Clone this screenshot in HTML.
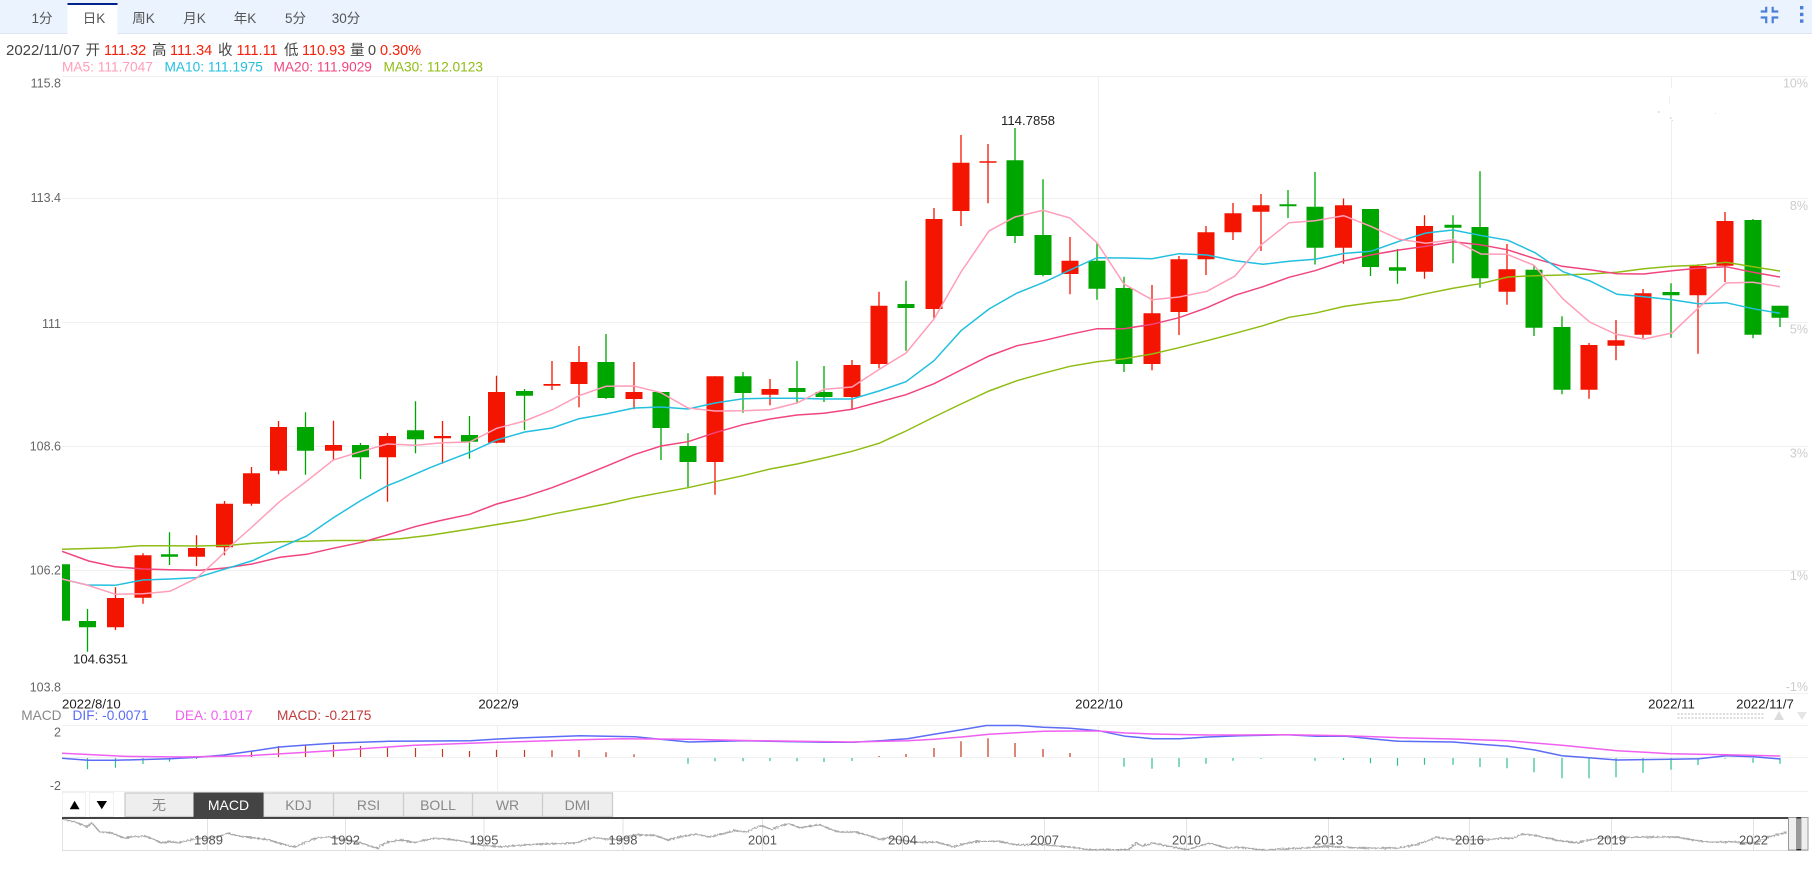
<!DOCTYPE html>
<html lang="zh">
<head>
<meta charset="utf-8">
<title>Chart</title>
<style>
html,body{margin:0;padding:0;background:#fff;width:1812px;height:881px;overflow:hidden}
svg{display:block;font-family:"Liberation Sans","Noto Sans CJK SC",sans-serif}
.t{font-size:13.5px;fill:#555;text-anchor:middle}
.i{font-size:14.5px;fill:#444}
.v{font-size:14.5px;fill:#f5200a}
.a{font-size:12.5px;fill:#666;text-anchor:end}
.p{font-size:12.5px;fill:#ccc;text-anchor:end}
.x{font-size:13.2px;fill:#222;text-anchor:middle}
.m{font-size:13.7px}
.b{font-size:14px;fill:#888;text-anchor:middle}
.y{font-size:13px;fill:#555;text-anchor:middle}
</style>
</head>
<body>
<svg width="1812" height="881" viewBox="0 0 1812 881" xmlns="http://www.w3.org/2000/svg">
<defs>
<clipPath id="c"><rect x="62" y="70" width="1750" height="640"/></clipPath>
<filter id="n" x="0" y="-20%" width="100%" height="140%"><feTurbulence type="fractalNoise" baseFrequency="0.45" numOctaves="2" seed="3"/><feDisplacementMap in="SourceGraphic" scale="3"/></filter>
</defs>
<rect width="1812" height="881" fill="#fff"/>
<!-- toolbar -->
<rect width="1812" height="33" fill="#eaf3fe"/>
<rect y="33" width="1812" height="1" fill="#dce5f0"/>
<rect x="67.5" y="3" width="50" height="31" fill="#fff"/>
<rect x="67.5" y="3" width="50" height="2" fill="#00238c"/>
<text class="t" x="42" y="23">1分</text>
<text class="t" x="94" y="23">日K</text>
<text class="t" x="143.5" y="23">周K</text>
<text class="t" x="194.5" y="23">月K</text>
<text class="t" x="245" y="23">年K</text>
<text class="t" x="295.5" y="23">5分</text>
<text class="t" x="346" y="23">30分</text>
<path d="M1760.7 11.5H1766.2V6.7M1772.7 6.7V11.5H1778.3M1760.7 17.5H1766.2V23.3M1778.3 17.5H1772.7V23.3" fill="none" stroke="#4a80d8" stroke-width="2.2"/>
<path d="M1800 6h3.4v3.4h-3.4zM1800 12.7h3.4v3.4h-3.4zM1800 19.4h3.4v3.4h-3.4z" fill="#4a80d8"/>
<!-- info -->
<text class="i" x="6" y="55" style="font-size:15px">2022/11/07</text>
<text class="i" x="85.5" y="55">开</text><text class="v" x="104" y="55">111.32</text>
<text class="i" x="152" y="55">高</text><text class="v" x="170" y="55">111.34</text>
<text class="i" x="218" y="55">收</text><text class="v" x="236.5" y="55">111.11</text>
<text class="i" x="284" y="55">低</text><text class="v" x="302" y="55">110.93</text>
<text class="i" x="350" y="55">量</text><text class="i" x="368" y="55">0</text>
<text class="v" x="380" y="55">0.30%</text>
<text class="m" x="62" y="71.5" fill="#ff9eb8">MA5: 111.7047</text>
<text class="m" x="164.5" y="71.5" fill="#22bfdf">MA10: 111.1975</text>
<text class="m" x="273.5" y="71.5" fill="#f0457f">MA20: 111.9029</text>
<text class="m" x="383.5" y="71.5" fill="#8fbc15">MA30: 112.0123</text>
<!-- grid -->
<path d="M62 76.5H1808M62 198.5H1808M62 322.5H1808M62 446.5H1808M62 570.5H1808M62 693.5H1808M62 725.5H1808M62 757.5H1808M62 791.5H1808" stroke="#efefef" stroke-width="1" fill="none"/>
<path d="M497.5 76V693M497.5 726V792M1098.5 76V693M1098.5 726V792M1671.5 76V88M1671.5 120V693M1671.5 726V792" stroke="#efefef" stroke-width="1" fill="none"/>
<path d="M1658 111h1.5v2h-1.5zM1670 117h1.5v2h-1.5zM1672 120h1v1h-1zM1715 113h1v1h-1z" fill="#dcdcdc"/>
<path d="M1669 96h1v8h-1z" fill="#f0f0f0"/>
<!-- axis labels -->
<text class="a" x="61" y="87.5">115.8</text>
<text class="a" x="61" y="202">113.4</text>
<text class="a" x="61" y="328">111</text>
<text class="a" x="61" y="450.5">108.6</text>
<text class="a" x="61" y="574.5">106.2</text>
<text class="a" x="61" y="691.5">103.8</text>
<text class="p" x="1808" y="87.5">10%</text>
<text class="p" x="1808" y="210">8%</text>
<text class="p" x="1808" y="333.5">5%</text>
<text class="p" x="1808" y="457.5">3%</text>
<text class="p" x="1808" y="580">1%</text>
<text class="p" x="1808" y="691">-1%</text>
<!-- candles -->
<g clip-path="url(#c)" fill="none">
<path stroke="#f41500" stroke-width="1.3" d="M115.5 587.3V630M143 553.3V603.7M196.5 535.3V566M224.5 501V555.3M251.5 467V505.7M278.5 421V474.3M333.5 420.7V460M387.5 433V501.7M442.5 421V463.7M496.5 375.7V443.3M552 361V390M579 346V407.3M634 362V409.3M715 376.3V494.7M770 379V405.3M852 360V409M879 291.7V368.3M934 208V318.3M961 135V226M988 144V203.3M1070 237V294.3M1152 285V370.3M1179 256V335M1206 226V275M1233 203V240M1261 194V251M1343.5 198.5V263.7M1424.5 215.3V278.7M1507 244V304.7M1589 343V398.7M1616 320V360.3M1643 289V338M1698 264.3V353.7M1725 212V282"/>
<path stroke="#f41500" stroke-width="17" d="M115.5 598V627.3M143 555.3V597.7M196.5 548V556.7M224.5 503.7V547.3M251.5 473.3V503.7M278.5 427V470.7M333.5 445V450.7M387.5 436V457.3M442.5 436V438.3M496.5 392V442.7M552 384V385.7M579 362V384M634 392V399M715 376.3V462M770 389V394.7M852 365V397M879 305.7V364M934 219V309M961 162.7V211M988 161.3V162.7M1070 260.7V274M1152 313.3V364M1179 259.3V312M1206 232.3V259.3M1233 213.3V232.3M1261 205.3V211.7M1343.5 205.3V247.7M1424.5 226V271.7M1507 269.3V291.7M1589 345V389.7M1616 340.3V345.7M1643 293.3V334.7M1698 266V295.3M1725 221V265.7"/>
<path stroke="#00a600" stroke-width="1.3" d="M87.5 609V651.7M169.5 532.3V565M305.5 412.3V474.7M360.5 443V479M415.5 401.3V453.3M469.5 416V458.7M524.5 389V430M606 334V399M661 392V460M688 433.3V487.7M743 372V412.7M797 361V402.3M824 366V402M906 280.7V350.7M1015 128V243M1043 179.3V276.3M1097 243.3V299.7M1124 276.7V372M1288 190V218M1315 172V264.5M1370.5 209V276M1397.5 249V283.7M1453 215.3V263.3M1480 171.3V287.7M1534 265V336M1562 316.3V394.3M1671 283.3V337.7M1753 219V338.3M1780 305.7V327"/>
<path stroke="#00a600" stroke-width="17" d="M61.5 564.3V620.7M87.5 621V627.3M169.5 554.3V556.7M305.5 427V450.7M360.5 445V457.3M415.5 430.3V439.3M469.5 435V441.7M524.5 391V395.7M606 362V398M661 392V428M688 446V462M743 376.3V393M797 388V392M824 392V397M906 304V308M1015 160.3V236M1043 235V275M1097 260.7V288.7M1124 288V364M1288 204.3V206.3M1315 206.7V247.7M1370.5 209V267M1397.5 267.3V270.7M1453 224.7V227.7M1480 227V278.3M1534 269.7V327.7M1562 327V389.7M1671 292V295.3M1753 220V334.7M1780 305.7V317.7"/>
<!-- MA lines -->
<polyline stroke="#8fbc15" stroke-width="1.5" points="62,549.3 115,547.7 140,545.7 170,545.7 196.7,546 230,545.3 253,543.3 280,541.7 306.7,541.3 333,540.5 370,540.5 400,538.7 430,535.3 470,529 497,524.5 525,520 556.7,513.3 606,504 634,497.7 661,492.7 688,487.7 715,481.7 743,475.7 770,469 797,464 824,458 852,451.3 879,443.3 906,431 934,417 961,404 989,391 1017,380.7 1043,373.3 1070,366.3 1097,361.7 1124,358.7 1152,354 1179,347.7 1207,340.7 1235,333.3 1263,325.7 1289,317.3 1315,313.2 1343.7,306.5 1370.7,302.7 1399,299.7 1426,293.7 1453,288.3 1480,283.7 1508,277 1535,275.7 1563,275 1590,274 1617,272.3 1644,268.7 1672,266.3 1698,265.3 1726,262.3 1753,266.7 1780,271"/>
<polyline stroke="#f0457f" stroke-width="1.5" points="62,551.3 88.7,561 115,566.7 143,569 170,569.7 200,570.3 225,568 252,564 280,557.3 306.7,554.3 333,548.3 361.7,542.3 387,535 415,526.7 430,523 443,520 469.7,514.3 496.7,504 524.7,496.7 552,487.7 579,477.3 606,466.3 634,454.7 661,446 688,441.7 715,432.7 743,424.7 770,419 797,415 824,413.3 852,409.3 879,402 906,394.7 934,383.7 961,370 989,356 1017,345.7 1043,340.7 1070,334.3 1097,328.7 1124,328.7 1152,324.3 1179,317.7 1207,307.7 1235,295.3 1263,286.7 1289,277.3 1315,270.7 1343.7,261 1370.7,255 1399,250 1426,246.3 1453,241.7 1480,244.7 1507,249.7 1534,258.3 1562,266.3 1590,269.7 1617,273.7 1644,274 1672,270.7 1698,268.3 1726,266.7 1753,272.3 1780,277"/>
<polyline stroke="#22bfdf" stroke-width="1.5" points="62,579 87,585 115,585.3 143,580 170,579 196,577.7 224,569.3 253,560.5 279,548 306.7,536 333,518 360,501 387.3,485.7 400,480.7 430,467.7 442.7,462.7 469.7,452.3 496.7,440 524.7,432 552,428 579,418.7 606,414 634,408 661,407 688,409 715,403 743,398.7 770,398.3 797,398.3 824,399 852,399 879,391 906,381.7 934,360.7 961,330.7 989,309 1017,293 1043,282.7 1070,270 1097,257.7 1124,258 1152,258.7 1179,253.7 1207,255 1235,260.7 1263,264.3 1289,261.3 1315,259.2 1343.7,253.5 1370.7,251.3 1399,241.3 1426,233 1453,230 1480,235.3 1508,240.3 1535,252.7 1563,271.7 1590,281 1617,294.3 1644,296.7 1672,299.7 1698,303.7 1726,302.7 1753,308.7 1780,313.3"/>
<polyline stroke="#ff9eb8" stroke-width="1.5" points="62,579 87,585 115.5,594.3 143,593.7 170,591.3 196.5,578.3 216.7,560 231.7,545 252,527 279.5,501.7 306,481.7 333.3,460 360.3,451.7 387.3,444 415.5,445.3 442.7,442.7 469.7,442 496.7,428.3 524.7,421 552,410 579,395.7 606,386.3 634,386 661,392.7 688,408 715,411 743,410.7 770,409.7 797,403 824,389.3 852,387 879,369.5 906,353 934,319 961,272 989,231 1015,217 1043,210.3 1070,218 1097,242.7 1124,284 1152,299.7 1179,297 1207,291.3 1235,276 1261,245 1289,222.7 1315,220.8 1343.7,215.7 1370.7,226.3 1399,239.3 1426,243.3 1453,239.7 1481,254 1507,254.3 1534,265.3 1563,299 1590,322.3 1616,334.3 1644,339 1672,333 1698,308.3 1726,283 1753,282.3 1780,286.7"/>
</g>
<text class="x" x="100.5" y="663.5">104.6351</text>
<text class="x" x="1028" y="125">114.7858</text>
<!-- x labels -->
<text class="x" x="62" y="708.5" style="text-anchor:start">2022/8/10</text>
<text class="x" x="498.5" y="708.5">2022/9</text>
<text class="x" x="1099" y="708.5">2022/10</text>
<text class="x" x="1671.5" y="708.5">2022/11</text>
<text class="x" x="1765" y="708.5">2022/11/7</text>
<path d="M1677.5 714H1764M1677.5 718H1764" stroke="#ddd" stroke-width="2" stroke-dasharray="2 1.5" fill="none"/>
<path d="M1779 711L1784 720H1774Z" fill="#ddd"/>
<path d="M1797 712H1807L1802 720Z" fill="#e5e5e5"/>
<!-- MACD header -->
<text class="m" x="61.5" y="720" fill="#888" style="text-anchor:end">MACD</text>
<text class="m" x="72.5" y="720" fill="#5b6cf5">DIF: -0.0071</text>
<text class="m" x="175" y="720" fill="#f060f0">DEA: 0.1017</text>
<text class="m" x="277" y="720" fill="#c03a3a">MACD: -0.2175</text>
<text class="a" x="61" y="736.5">2</text>
<text class="a" x="61" y="790">-2</text>
<!-- MACD bars -->
<path fill="none" stroke="#2fc08f" stroke-width="1.2" d="M87.5 758V769.3M115.5 758V767.7M143 758V764M169.5 758V761.7M196.5 758V759M688 758V763.7M715 758V761.3M743 758V761.3M770 758V761M797 758V761.3M824 758V762M852 758V761M1124 758V766.7M1152 758V768.7M1179 758V767M1206 758V763.7M1233 758V760.7M1261 758V758.7M1315 758V760.7M1343.5 758V760M1370.5 758V763.3M1397.5 758V765.7M1424.5 758V764.7M1453 758V764.7M1480 758V767M1507 758V768.3M1534 758V772.3M1562 758V778.3M1589 758V778.3M1616 758V777.3M1643 758V772.7M1671 758V769.7M1698 758V765M1725 758V758.7M1753 758V762.7M1780 758V763.7"/>
<path fill="none" stroke="#c03a1e" stroke-width="1.2" d="M224.5 757V755M251.5 757V750.7M278.5 757V746M305.5 757V745M333.5 757V744.7M360.5 757V746M387.5 757V746.7M415.5 757V748M442.5 757V749M469.5 757V751M496.5 757V749.7M524.5 757V750M552 757V750.3M579 757V750M606 757V752.3M634 757V754.3M879 757V756M906 757V754M934 757V748M961 757V741.3M988 757V738.3M1015 757V743M1043 757V749M1070 757V753"/>
<polyline fill="none" stroke="#5b6cf5" stroke-width="1.5" points="62,758.3 88,760.3 115,760.3 170,758.7 197.8,757.3 224,755 251,751.3 279.4,747 306.8,745 333.3,743.3 388.5,741.3 470.6,740.7 498,739 525,737.7 580,735.7 634,736.7 650,738.3 689,742 743,740.7 825,742.3 852.4,742.3 880,740.7 907.5,738.7 934,734.3 961.5,729.7 986.3,725.5 1019,725.5 1043.4,727.3 1070,728.3 1098.5,730.7 1125.6,736.3 1153,738.7 1179.6,738.7 1207.5,737 1240,735.8 1287.4,734.7 1316.6,736.3 1345.8,736.3 1370.6,738.7 1399,741.3 1453,742 1480,744.3 1507.8,746.3 1534.8,750 1562,755.7 1588.8,757.7 1617,760 1671,759.3 1699,758.7 1726.3,755.7 1753.3,756.7 1780.3,759"/>
<polyline fill="none" stroke="#f060f0" stroke-width="1.5" points="62,753.3 124,756.3 182.4,757 248.8,755.7 331.7,750.7 414.6,745.3 497.5,742.3 580.4,739.7 622,738.7 689,739.3 755,740.7 852.4,742 907.5,740.7 934,739.3 961.5,737 989.4,734.3 1016.6,732.7 1043.4,731.3 1070,731 1098.5,731 1125.6,733 1153,734 1207.5,735 1240,735 1287.4,734.7 1345.8,735.7 1399,737.7 1453,739 1507.8,740.7 1562,745.3 1617,750.7 1671,753.7 1726.3,754.7 1780.3,756"/>
<!-- buttons -->
<rect x="62.5" y="792.5" width="23" height="24" fill="#fff" stroke="#f0f0f0"/>
<rect x="89.5" y="792.5" width="24" height="24" fill="#fff" stroke="#f0f0f0"/>
<path d="M74.6 800.7L79.6 809.3H69.7Z" fill="#000"/>
<path d="M96.6 801H107L101.8 809.3Z" fill="#000"/>
<rect x="125" y="793" width="487.5" height="23.5" fill="#eee" stroke="#ccc" stroke-width="1.3"/>
<path d="M263.5 793V816.5M333.5 793V816.5M403.5 793V816.5M472.5 793V816.5M542.5 793V816.5" stroke="#ccc" stroke-width="1.3"/>
<rect x="193.5" y="792.5" width="70" height="24.5" fill="#444"/>
<text class="b" x="159" y="810">无</text>
<text class="b" x="228.5" y="810" style="fill:#fff">MACD</text>
<text class="b" x="298.5" y="810">KDJ</text>
<text class="b" x="368.5" y="810">RSI</text>
<text class="b" x="438" y="810">BOLL</text>
<text class="b" x="507.5" y="810">WR</text>
<text class="b" x="577.5" y="810">DMI</text>
<!-- overview -->
<path d="M62.5 818V850M207.5 818V850M345.5 818V850M484 818V850M623 818V850M762.5 818V850M902.5 818V850M1044.5 818V850M1186.5 818V850M1328.5 818V850M1469.5 818V850M1611.5 818V850M1753.5 818V850" stroke="#e2e2e2" fill="none"/>
<path d="M62 850.5H1808" stroke="#ddd" fill="none"/>
<polyline fill="none" stroke="#aaa" stroke-width="1.5" filter="url(#n)" points="62,819.3 74.6,821.7 80,824 87,826.7 92,823 99.5,831.7 112,833 124,838 135,836.5 145,836 153,839 161.7,843 170,841.5 178,842.7 195,839 211,838 220,836 228,833 236,835.5 244.6,836.7 255,838 269.5,840 282,844 294.4,847 302,844 309,840.7 318,838 327.5,836.7 342,839 356.6,841.7 367,845 377.3,848.3 383,844 389.7,841.7 402,840 414.6,842.7 425,840 435.3,838.3 447,839 460,840.7 470,842.5 481,845 491,846 501.7,846.7 522.4,845 543,844 576.3,843 585,840 593,837.7 607,839 622,839.3 634,835 650,835 657,836 668,840 680,837 696,834 710,837 722,834 735.4,830.7 746.6,832 755,828 760.6,825.3 772,829.7 780,826 788.7,823.7 800,828 810,826 819.6,824.7 830,829 839,832 856,832 870,836 881,839.7 887,838 900,840 915,842.3 937.4,842.3 954,847 965,843.5 976.7,841.3 999,841.3 1016,844.7 1044,844.7 1072,847.3 1089,849.7 1128,849.7 1136.6,843 1142,846 1153.5,843 1167.5,846 1187,849.7 1200,846 1209.6,843 1226.4,848 1240.4,847.3 1263,850 1302,848 1327.4,846.3 1358,848 1397.6,848 1417,844.7 1437,837.3 1453.7,839.7 1487.4,839.7 1500,838.3 1513,838.3 1523,834 1533,835 1560,840.7 1577,842.7 1597,838.3 1633,837.3 1675,836.7 1697,840.7 1713,842.3 1733,841.7 1753,843.3 1770,836.7 1787,832"/>
<rect x="62" y="817" width="1726.5" height="2" fill="#444"/>
<text class="y" x="208.5" y="844.5">1989</text>
<text class="y" x="345.5" y="844.5">1992</text>
<text class="y" x="484" y="844.5">1995</text>
<text class="y" x="623" y="844.5">1998</text>
<text class="y" x="762.5" y="844.5">2001</text>
<text class="y" x="902.5" y="844.5">2004</text>
<text class="y" x="1044.5" y="844.5">2007</text>
<text class="y" x="1186.5" y="844.5">2010</text>
<text class="y" x="1328.5" y="844.5">2013</text>
<text class="y" x="1469.5" y="844.5">2016</text>
<text class="y" x="1611.5" y="844.5">2019</text>
<text class="y" x="1753.5" y="844.5">2022</text>
<!-- handle -->
<rect x="1788.5" y="817.5" width="8" height="32.5" fill="#eee" stroke="#999"/>
<rect x="1801" y="817.5" width="7" height="32.5" fill="#eee" stroke="#999"/>
<rect x="1796.5" y="817" width="4.5" height="33.5" fill="#999"/>
<path d="M1796.5 817.8H1801M1796.5 849.7H1801" stroke="#222" stroke-width="1.3"/>
</svg>
</body>
</html>
